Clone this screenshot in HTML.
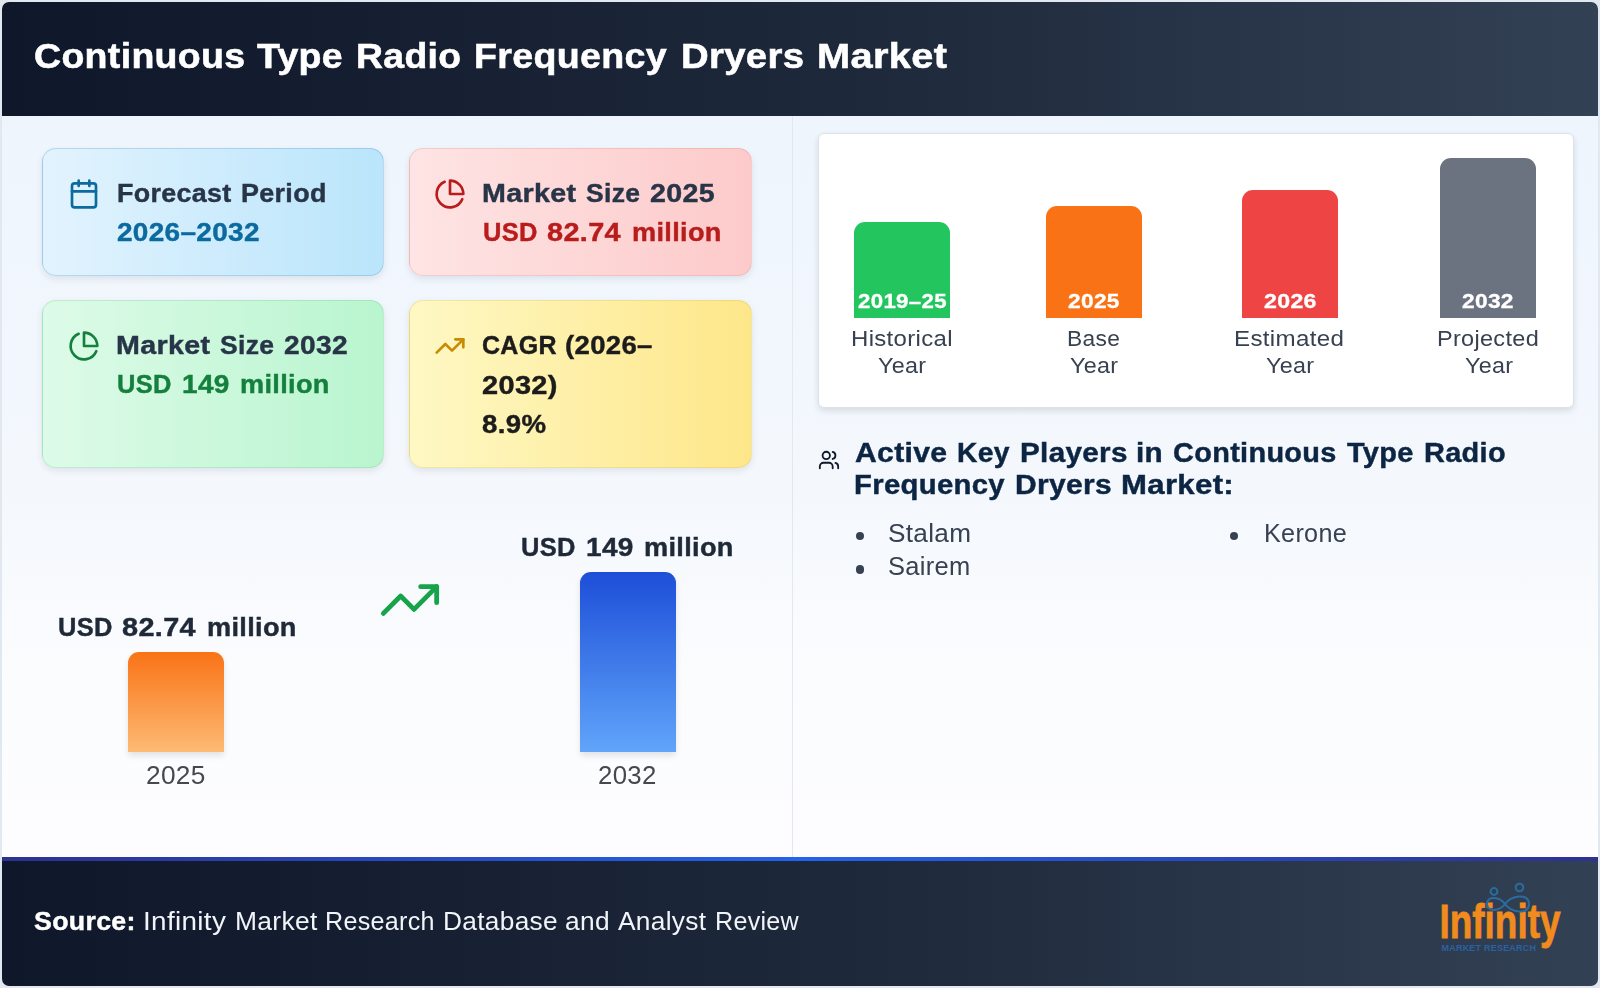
<!DOCTYPE html><html><head><meta charset="utf-8"><style>
*{margin:0;padding:0;box-sizing:border-box}
html,body{width:1600px;height:988px;overflow:hidden}
body{background:#e2e8f0;font-family:"Liberation Sans", sans-serif;position:relative}
.card{position:absolute;left:2px;top:2px;width:1596px;height:984px;border-radius:7px;overflow:hidden;background:#f4f8fc}
.hdr{position:absolute;left:0;top:0;width:1596px;height:114px;background:linear-gradient(90deg,#0f172a 0%,#1e293b 55%,#334155 100%)}
.bodybg{position:absolute;left:0;top:114px;width:1596px;height:741px;background:linear-gradient(180deg,#eef5fd 0%,#f4f8fd 50%,#fbfcfe 75%,#fdfdff 100%)}
.divider{position:absolute;left:790px;top:114px;width:1px;height:741px;background:#e3e7ee}
.ftr{position:absolute;left:0;top:855px;width:1596px;height:129px;background:linear-gradient(90deg,#0f172a 0%,#1e293b 55%,#334155 100%)}
.fbar{position:absolute;left:0;top:855px;width:1596px;height:4px;background:linear-gradient(90deg,#2e3192 0%,#2563eb 50%,#2e3192 100%)}
.abs{position:absolute}
.sc{position:absolute;border-radius:14px;border:1px solid rgba(100,116,139,0.18);box-shadow:0 3px 7px rgba(15,23,42,0.09)}
.ic{position:absolute}
.bar{position:absolute;border-radius:11px 11px 0 0}
.t{position:absolute;white-space:nowrap;line-height:40px;height:40px;transform-origin:0 0;will-change:transform}
.mk{display:inline-block;width:0;height:0;vertical-align:baseline}
</style></head><body><div class="card">
<div class="hdr"></div><div class="bodybg"></div><div class="divider"></div>
<div class="ftr"></div><div class="fbar"></div>
</div>
<div class="sc" style="left:42px;top:148px;width:342px;height:128px;background:linear-gradient(90deg,#e2f3fe,#bae5fb);border-color:rgba(56,130,190,0.24)"></div>
<div class="sc" style="left:409px;top:148px;width:343px;height:128px;background:linear-gradient(90deg,#fee4e4,#fdcaca);border-color:rgba(220,120,120,0.22)"></div>
<div class="sc" style="left:42px;top:300px;width:342px;height:168px;background:linear-gradient(90deg,#ddfbe8,#b9f5cf);border-color:rgba(80,180,120,0.22)"></div>
<div class="sc" style="left:409px;top:300px;width:343px;height:168px;background:linear-gradient(90deg,#fef8c4,#fee78a);border-color:rgba(200,170,60,0.22)"></div>
<svg class="ic" style="left:68px;top:178px" width="32" height="32" viewBox="0 0 24 24" fill="none" stroke="#0b6a9e" stroke-width="2" stroke-linecap="round" stroke-linejoin="round"><rect x="3" y="4" width="18" height="18" rx="2"/><path d="M16 2v4M8 2v4M3 10h18"/></svg>
<svg class="ic" style="left:434px;top:178px" width="32" height="32" viewBox="0 0 24 24" fill="none" stroke="#b91c1c" stroke-width="2" stroke-linecap="round" stroke-linejoin="round"><path d="M21.21 15.89A10 10 0 1 1 8 2.83"/><path d="M22 12A10 10 0 0 0 12 2v10z"/></svg>
<svg class="ic" style="left:68px;top:330px" width="32" height="32" viewBox="0 0 24 24" fill="none" stroke="#15803d" stroke-width="2" stroke-linecap="round" stroke-linejoin="round"><path d="M21.21 15.89A10 10 0 1 1 8 2.83"/><path d="M22 12A10 10 0 0 0 12 2v10z"/></svg>
<svg class="ic" style="left:434px;top:330px" width="32" height="32" viewBox="0 0 24 24" fill="none" stroke="#ca8a04" stroke-width="2" stroke-linecap="round" stroke-linejoin="round"><polyline points="22 7 13.5 15.5 8.5 10.5 2 17"/><polyline points="16 7 22 7 22 13"/></svg>
<div class="bar" style="left:128px;top:652px;width:96px;height:100px;background:linear-gradient(180deg,#f97316,#fdba74);box-shadow:0 4px 6px rgba(0,0,0,0.10)"></div>
<div class="bar" style="left:580px;top:572px;width:96px;height:180px;background:linear-gradient(180deg,#1d4ed8,#60a5fa);box-shadow:0 4px 6px rgba(0,0,0,0.10)"></div>
<svg class="ic" style="left:378px;top:568px" width="64" height="64" viewBox="0 0 24 24" fill="none" stroke="#16a34a" stroke-width="1.8" stroke-linecap="round" stroke-linejoin="round"><polyline points="22 7 13.5 15.5 8.5 10.5 2 17"/><polyline points="16 7 22 7 22 13"/></svg>
<div class="abs" style="left:818px;top:133px;width:756px;height:275px;background:#fff;border:1px solid #dde2ea;border-radius:6px;box-shadow:0 3px 6px rgba(15,23,42,0.12)"></div>
<div class="bar" style="left:854px;top:222px;width:96px;height:96px;background:#22c55e"></div>
<div class="bar" style="left:1046px;top:206px;width:96px;height:112px;background:#f97316"></div>
<div class="bar" style="left:1242px;top:190px;width:96px;height:128px;background:#ef4444"></div>
<div class="bar" style="left:1440px;top:158px;width:96px;height:160px;background:#6b7280"></div>
<svg class="ic" style="left:818px;top:449px" width="22" height="22" viewBox="0 0 24 24" fill="none" stroke="#111827" stroke-width="2" stroke-linecap="round" stroke-linejoin="round"><path d="M16 21v-2a4 4 0 0 0-4-4H6a4 4 0 0 0-4 4v2"/><circle cx="9" cy="7" r="4"/><path d="M22 21v-2a4 4 0 0 0-3-3.87"/><path d="M16 3.13a4 4 0 0 1 0 7.75"/></svg>
<div class="abs" style="left:855.9px;top:531.9px;width:8.2px;height:8.2px;border-radius:50%;background:#374151"></div>
<div class="abs" style="left:855.9px;top:565.4px;width:8.2px;height:8.2px;border-radius:50%;background:#374151"></div>
<div class="abs" style="left:1229.9px;top:531.6px;width:8.2px;height:8.2px;border-radius:50%;background:#374151"></div>
<svg class="abs" style="left:1430px;top:870px" width="140" height="90" viewBox="1430 870 140 90">
<text x="1439.5" y="938.4" font-family="Liberation Sans, sans-serif" font-size="49" font-weight="700" fill="#f28b1e" stroke="#f28b1e" stroke-width="0.8" textLength="121" lengthAdjust="spacingAndGlyphs">Infinity</text>
<g fill="none" stroke="#2b6c9f" stroke-width="2" stroke-linecap="round">
<path d="M1505 904 C 1500 897, 1487 895, 1487 904 C 1487 913, 1500 911, 1505 904 C 1510 896, 1529 892, 1529 904 C 1529 916, 1510 912, 1505 904 Z"/>
<circle cx="1494" cy="891.5" r="3.4"/>
<circle cx="1519.5" cy="887.5" r="3.8"/>
</g>
<text x="1441.5" y="951" font-family="Liberation Sans, sans-serif" font-size="9" font-weight="700" fill="#2a62a0" textLength="94.5" lengthAdjust="spacing">MARKET RESEARCH</text>
</svg>
<div class="t" id="title_0" style="left:34.00px;top:36.01px;font-size:34.80px;letter-spacing:0.300px;color:#ffffff;font-weight:700;transform:scaleX(1.0773);-webkit-text-stroke:0.57px currentColor">Continuous<span class="mk"></span></div>
<div class="t" id="title_1" style="left:257.00px;top:36.01px;font-size:34.80px;letter-spacing:0.300px;color:#ffffff;font-weight:700;transform:scaleX(1.0759);-webkit-text-stroke:0.57px currentColor">Type<span class="mk"></span></div>
<div class="t" id="title_2" style="left:356.00px;top:36.01px;font-size:34.80px;letter-spacing:0.300px;color:#ffffff;font-weight:700;transform:scaleX(1.0737);-webkit-text-stroke:0.57px currentColor">Radio<span class="mk"></span></div>
<div class="t" id="title_3" style="left:474.00px;top:36.01px;font-size:34.80px;letter-spacing:0.300px;color:#ffffff;font-weight:700;transform:scaleX(1.0796);-webkit-text-stroke:0.57px currentColor">Frequency<span class="mk"></span></div>
<div class="t" id="title_4" style="left:681.00px;top:36.01px;font-size:34.80px;letter-spacing:0.300px;color:#ffffff;font-weight:700;transform:scaleX(1.1009);-webkit-text-stroke:0.57px currentColor">Dryers<span class="mk"></span></div>
<div class="t" id="title_5" style="left:817.00px;top:36.01px;font-size:34.80px;letter-spacing:0.300px;color:#ffffff;font-weight:700;transform:scaleX(1.1429);-webkit-text-stroke:0.57px currentColor">Market<span class="mk"></span></div>
<div class="t" id="c1t_0" style="left:117.20px;top:172.51px;font-size:24.98px;letter-spacing:0.300px;color:#283548;font-weight:700;transform:scaleX(1.0762);-webkit-text-stroke:0.41px currentColor">Forecast<span class="mk"></span></div>
<div class="t" id="c1t_1" style="left:241.20px;top:172.51px;font-size:24.98px;letter-spacing:0.300px;color:#283548;font-weight:700;transform:scaleX(1.0779);-webkit-text-stroke:0.41px currentColor">Period<span class="mk"></span></div>
<div class="t" id="c1v" style="left:117.00px;top:212.31px;font-size:24.98px;letter-spacing:0.300px;color:#0b6a9e;font-weight:700;transform:scaleX(1.1190);-webkit-text-stroke:0.41px currentColor">2026–2032<span class="mk"></span></div>
<div class="t" id="c2t_0" style="left:482.00px;top:172.51px;font-size:24.98px;letter-spacing:0.300px;color:#283548;font-weight:700;transform:scaleX(1.1483);-webkit-text-stroke:0.41px currentColor">Market<span class="mk"></span></div>
<div class="t" id="c2t_1" style="left:586.00px;top:172.51px;font-size:24.98px;letter-spacing:0.300px;color:#283548;font-weight:700;transform:scaleX(1.0612);-webkit-text-stroke:0.41px currentColor">Size<span class="mk"></span></div>
<div class="t" id="c2t_2" style="left:650.00px;top:172.51px;font-size:24.98px;letter-spacing:0.300px;color:#283548;font-weight:700;transform:scaleX(1.1455);-webkit-text-stroke:0.41px currentColor">2025<span class="mk"></span></div>
<div class="t" id="c2v_0" style="left:482.80px;top:212.31px;font-size:24.98px;letter-spacing:0.300px;color:#b91c1c;font-weight:700;transform:scaleX(1.0192);-webkit-text-stroke:0.41px currentColor">USD<span class="mk"></span></div>
<div class="t" id="c2v_1" style="left:546.80px;top:212.31px;font-size:24.98px;letter-spacing:0.300px;color:#b91c1c;font-weight:700;transform:scaleX(1.1565);-webkit-text-stroke:0.41px currentColor">82.74<span class="mk"></span></div>
<div class="t" id="c2v_2" style="left:631.80px;top:212.31px;font-size:24.98px;letter-spacing:0.300px;color:#b91c1c;font-weight:700;transform:scaleX(1.0875);-webkit-text-stroke:0.41px currentColor">million<span class="mk"></span></div>
<div class="t" id="c3t_0" style="left:115.80px;top:324.71px;font-size:24.98px;letter-spacing:0.300px;color:#283548;font-weight:700;transform:scaleX(1.1483);-webkit-text-stroke:0.41px currentColor">Market<span class="mk"></span></div>
<div class="t" id="c3t_1" style="left:219.80px;top:324.71px;font-size:24.98px;letter-spacing:0.300px;color:#283548;font-weight:700;transform:scaleX(1.0612);-webkit-text-stroke:0.41px currentColor">Size<span class="mk"></span></div>
<div class="t" id="c3t_2" style="left:283.80px;top:324.71px;font-size:24.98px;letter-spacing:0.300px;color:#283548;font-weight:700;transform:scaleX(1.1273);-webkit-text-stroke:0.41px currentColor">2032<span class="mk"></span></div>
<div class="t" id="c3v_0" style="left:116.80px;top:364.31px;font-size:24.98px;letter-spacing:0.300px;color:#15803d;font-weight:700;transform:scaleX(1.0192);-webkit-text-stroke:0.41px currentColor">USD<span class="mk"></span></div>
<div class="t" id="c3v_1" style="left:181.80px;top:364.31px;font-size:24.98px;letter-spacing:0.300px;color:#15803d;font-weight:700;transform:scaleX(1.1220);-webkit-text-stroke:0.41px currentColor">149<span class="mk"></span></div>
<div class="t" id="c3v_2" style="left:239.80px;top:364.31px;font-size:24.98px;letter-spacing:0.300px;color:#15803d;font-weight:700;transform:scaleX(1.0875);-webkit-text-stroke:0.41px currentColor">million<span class="mk"></span></div>
<div class="t" id="c4a_0" style="left:482.20px;top:324.51px;font-size:24.98px;letter-spacing:0.300px;color:#1c1c1c;font-weight:700;transform:scaleX(1.0000);-webkit-text-stroke:0.41px currentColor">CAGR<span class="mk"></span></div>
<div class="t" id="c4a_1" style="left:565.20px;top:324.51px;font-size:24.98px;letter-spacing:0.300px;color:#1c1c1c;font-weight:700;transform:scaleX(1.1026);-webkit-text-stroke:0.41px currentColor">(2026–<span class="mk"></span></div>
<div class="t" id="c4b" style="left:482.00px;top:364.71px;font-size:24.98px;letter-spacing:0.300px;color:#1c1c1c;font-weight:700;transform:scaleX(1.1587);-webkit-text-stroke:0.41px currentColor">2032)<span class="mk"></span></div>
<div class="t" id="c4c" style="left:482.20px;top:404.01px;font-size:24.98px;letter-spacing:0.300px;color:#1c1c1c;font-weight:700;transform:scaleX(1.1058);-webkit-text-stroke:0.41px currentColor">8.9%<span class="mk"></span></div>
<div class="t" id="lab1_0" style="left:57.60px;top:607.01px;font-size:24.98px;letter-spacing:0.300px;color:#1f2937;font-weight:700;transform:scaleX(1.0192);-webkit-text-stroke:0.41px currentColor">USD<span class="mk"></span></div>
<div class="t" id="lab1_1" style="left:121.60px;top:607.01px;font-size:24.98px;letter-spacing:0.300px;color:#1f2937;font-weight:700;transform:scaleX(1.1565);-webkit-text-stroke:0.41px currentColor">82.74<span class="mk"></span></div>
<div class="t" id="lab1_2" style="left:206.60px;top:607.01px;font-size:24.98px;letter-spacing:0.300px;color:#1f2937;font-weight:700;transform:scaleX(1.0875);-webkit-text-stroke:0.41px currentColor">million<span class="mk"></span></div>
<div class="t" id="yr1" style="left:145.80px;top:754.81px;font-size:24.87px;letter-spacing:0.300px;color:#45494f;font-weight:400;transform:scaleX(1.0556)">2025<span class="mk"></span></div>
<div class="t" id="lab2_0" style="left:521.20px;top:527.31px;font-size:24.98px;letter-spacing:0.300px;color:#1f2937;font-weight:700;transform:scaleX(1.0192);-webkit-text-stroke:0.41px currentColor">USD<span class="mk"></span></div>
<div class="t" id="lab2_1" style="left:586.20px;top:527.31px;font-size:24.98px;letter-spacing:0.300px;color:#1f2937;font-weight:700;transform:scaleX(1.1220);-webkit-text-stroke:0.41px currentColor">149<span class="mk"></span></div>
<div class="t" id="lab2_2" style="left:644.20px;top:527.31px;font-size:24.98px;letter-spacing:0.300px;color:#1f2937;font-weight:700;transform:scaleX(1.0875);-webkit-text-stroke:0.41px currentColor">million<span class="mk"></span></div>
<div class="t" id="yr2" style="left:598.20px;top:755.21px;font-size:24.87px;letter-spacing:0.300px;color:#45494f;font-weight:400;transform:scaleX(1.0370)">2032<span class="mk"></span></div>
<div class="t" id="bv1" style="left:857.80px;top:280.71px;font-size:20.48px;letter-spacing:0.300px;color:#ffffff;font-weight:700;transform:scaleX(1.0864);-webkit-text-stroke:0.33px currentColor">2019–25<span class="mk"></span></div>
<div class="t" id="bv2" style="left:1067.80px;top:280.50px;font-size:20.48px;letter-spacing:0.300px;color:#ffffff;font-weight:700;transform:scaleX(1.1087);-webkit-text-stroke:0.33px currentColor">2025<span class="mk"></span></div>
<div class="t" id="bv3" style="left:1264.00px;top:280.50px;font-size:20.48px;letter-spacing:0.300px;color:#ffffff;font-weight:700;transform:scaleX(1.1304);-webkit-text-stroke:0.33px currentColor">2026<span class="mk"></span></div>
<div class="t" id="bv4" style="left:1462.00px;top:280.60px;font-size:20.48px;letter-spacing:0.300px;color:#ffffff;font-weight:700;transform:scaleX(1.1087);-webkit-text-stroke:0.33px currentColor">2032<span class="mk"></span></div>
<div class="t" id="bl1a" style="left:851.00px;top:318.01px;font-size:22.78px;letter-spacing:0.300px;color:#374151;font-weight:400;transform:scaleX(1.0538)">Historical<span class="mk"></span></div>
<div class="t" id="bl1b" style="left:878.00px;top:345.21px;font-size:22.78px;letter-spacing:0.300px;color:#374151;font-weight:400;transform:scaleX(1.0232)">Year<span class="mk"></span></div>
<div class="t" id="bl2a" style="left:1067.00px;top:317.51px;font-size:22.78px;letter-spacing:0.300px;color:#374151;font-weight:400;transform:scaleX(1.0000)">Base<span class="mk"></span></div>
<div class="t" id="bl2b" style="left:1070.00px;top:345.41px;font-size:22.78px;letter-spacing:0.300px;color:#374151;font-weight:400;transform:scaleX(1.0232)">Year<span class="mk"></span></div>
<div class="t" id="bl3a" style="left:1234.20px;top:317.51px;font-size:22.78px;letter-spacing:0.300px;color:#374151;font-weight:400;transform:scaleX(1.0600)">Estimated<span class="mk"></span></div>
<div class="t" id="bl3b" style="left:1266.00px;top:345.41px;font-size:22.78px;letter-spacing:0.300px;color:#374151;font-weight:400;transform:scaleX(1.0232)">Year<span class="mk"></span></div>
<div class="t" id="bl4a" style="left:1437.20px;top:317.61px;font-size:22.78px;letter-spacing:0.300px;color:#374151;font-weight:400;transform:scaleX(1.0316)">Projected<span class="mk"></span></div>
<div class="t" id="bl4b" style="left:1465.00px;top:345.41px;font-size:22.78px;letter-spacing:0.300px;color:#374151;font-weight:400;transform:scaleX(1.0232)">Year<span class="mk"></span></div>
<div class="t" id="kp1_0" style="left:854.60px;top:432.81px;font-size:27.12px;letter-spacing:0.300px;color:#0c2543;font-weight:700;transform:scaleX(1.1099);-webkit-text-stroke:0.44px currentColor">Active<span class="mk"></span></div>
<div class="t" id="kp1_1" style="left:956.60px;top:432.81px;font-size:27.12px;letter-spacing:0.300px;color:#0c2543;font-weight:700;transform:scaleX(1.0416);-webkit-text-stroke:0.44px currentColor">Key<span class="mk"></span></div>
<div class="t" id="kp1_2" style="left:1019.60px;top:432.81px;font-size:27.12px;letter-spacing:0.300px;color:#0c2543;font-weight:700;transform:scaleX(1.0932);-webkit-text-stroke:0.44px currentColor">Players<span class="mk"></span></div>
<div class="t" id="kp1_3" style="left:1135.60px;top:432.81px;font-size:27.12px;letter-spacing:0.300px;color:#0c2543;font-weight:700;transform:scaleX(1.0952);-webkit-text-stroke:0.44px currentColor">in<span class="mk"></span></div>
<div class="t" id="kp1_4" style="left:1172.60px;top:432.81px;font-size:27.12px;letter-spacing:0.300px;color:#0c2543;font-weight:700;transform:scaleX(1.0659);-webkit-text-stroke:0.44px currentColor">Continuous<span class="mk"></span></div>
<div class="t" id="kp1_5" style="left:1346.60px;top:432.81px;font-size:27.12px;letter-spacing:0.300px;color:#0c2543;font-weight:700;transform:scaleX(1.0658);-webkit-text-stroke:0.44px currentColor">Type<span class="mk"></span></div>
<div class="t" id="kp1_6" style="left:1423.60px;top:432.81px;font-size:27.12px;letter-spacing:0.300px;color:#0c2543;font-weight:700;transform:scaleX(1.0668);-webkit-text-stroke:0.44px currentColor">Radio<span class="mk"></span></div>
<div class="t" id="kp2_0" style="left:853.60px;top:464.71px;font-size:27.12px;letter-spacing:0.300px;color:#0c2543;font-weight:700;transform:scaleX(1.0793);-webkit-text-stroke:0.44px currentColor">Frequency<span class="mk"></span></div>
<div class="t" id="kp2_1" style="left:1014.60px;top:464.71px;font-size:27.12px;letter-spacing:0.300px;color:#0c2543;font-weight:700;transform:scaleX(1.1048);-webkit-text-stroke:0.44px currentColor">Dryers<span class="mk"></span></div>
<div class="t" id="kp2_2" style="left:1120.60px;top:464.71px;font-size:27.12px;letter-spacing:0.300px;color:#0c2543;font-weight:700;transform:scaleX(1.1475);-webkit-text-stroke:0.44px currentColor">Market:<span class="mk"></span></div>
<div class="t" id="t1" style="left:888.00px;top:512.91px;font-size:24.87px;letter-spacing:0.300px;color:#374151;font-weight:400;transform:scaleX(1.0528)">Stalam<span class="mk"></span></div>
<div class="t" id="t2" style="left:888.00px;top:546.41px;font-size:24.87px;letter-spacing:0.300px;color:#374151;font-weight:400;transform:scaleX(1.0258)">Sairem<span class="mk"></span></div>
<div class="t" id="t3" style="left:1264.00px;top:512.61px;font-size:24.87px;letter-spacing:0.300px;color:#374151;font-weight:400;transform:scaleX(1.0131)">Kerone<span class="mk"></span></div>
<div class="t" id="src1" style="left:33.60px;top:900.71px;font-size:25.08px;letter-spacing:0.300px;color:#ffffff;font-weight:700;transform:scaleX(1.0652);-webkit-text-stroke:0.41px currentColor">Source:<span class="mk"></span></div>
<div class="t" id="src2_0" style="left:143.00px;top:900.71px;font-size:25.08px;letter-spacing:0.300px;color:#f1f5f9;font-weight:400;transform:scaleX(1.1111)">Infinity<span class="mk"></span></div>
<div class="t" id="src2_1" style="left:235.00px;top:900.71px;font-size:25.08px;letter-spacing:0.300px;color:#f1f5f9;font-weight:400;transform:scaleX(1.0526)">Market<span class="mk"></span></div>
<div class="t" id="src2_2" style="left:325.00px;top:900.71px;font-size:25.08px;letter-spacing:0.300px;color:#f1f5f9;font-weight:400;transform:scaleX(1.0000)">Research<span class="mk"></span></div>
<div class="t" id="src2_3" style="left:443.00px;top:900.71px;font-size:25.08px;letter-spacing:0.300px;color:#f1f5f9;font-weight:400;transform:scaleX(1.0472)">Database<span class="mk"></span></div>
<div class="t" id="src2_4" style="left:565.00px;top:900.71px;font-size:25.08px;letter-spacing:0.300px;color:#f1f5f9;font-weight:400;transform:scaleX(1.0500)">and<span class="mk"></span></div>
<div class="t" id="src2_5" style="left:618.00px;top:900.71px;font-size:25.08px;letter-spacing:0.300px;color:#f1f5f9;font-weight:400;transform:scaleX(1.0476)">Analyst<span class="mk"></span></div>
<div class="t" id="src2_6" style="left:715.00px;top:900.71px;font-size:25.08px;letter-spacing:0.300px;color:#f1f5f9;font-weight:400;transform:scaleX(1.0000)">Review<span class="mk"></span></div></body></html>
